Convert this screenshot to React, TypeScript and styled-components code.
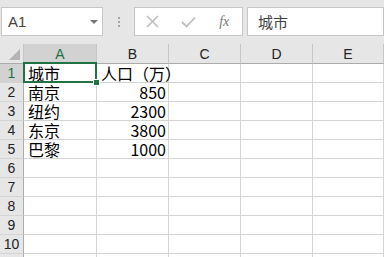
import React from 'react'
import styled, { createGlobalStyle } from 'styled-components'

const GlobalStyle = createGlobalStyle`
  html, body {
    margin: 0;
    padding: 0;
    background: #ffffff;
    overflow: hidden;
  }
  body {
    font-family: "Noto Sans CJK SC", "Liberation Sans", sans-serif;
  }
`

const Sheet = styled.div`
  width: 384px;
  height: 257px;
  overflow: hidden;
  background: #ffffff;
`

const Toolbar = styled.div`
  display: flex;
  align-items: center;
  height: 44px;
  box-sizing: border-box;
  padding: 7px 0 8px 1px;
  background: #e6e6e6;
`

const Box = styled.div<{ $w?: number }>`
  box-sizing: border-box;
  height: 29px;
  ${p => (p.$w ? `width: ${p.$w}px;` : 'flex: 1;')}
  background: #ffffff;
  border: 1px solid #c6c6c6;
  display: flex;
  align-items: center;
`

const NameText = styled.span`
  flex: 1;
  padding-left: 6px;
  font-family: "Liberation Sans", sans-serif;
  font-size: 15px;
  color: #444444;
`

const Caret = styled.span`
  width: 0;
  height: 0;
  margin-right: 4px;
  border-left: 4px solid transparent;
  border-right: 4px solid transparent;
  border-top: 4px solid #777777;
`

const Grip = styled.div`
  width: 31px;
  display: flex;
  flex-direction: column;
  align-items: center;
  gap: 2px;
  span {
    width: 2px;
    height: 2px;
    background: #a6a6a6;
  }
`

const IconBtn = styled.div`
  width: 36px;
  display: flex;
  justify-content: center;
  align-items: center;
`

const Fx = styled.span`
  font-family: "Liberation Serif", serif;
  font-style: italic;
  font-size: 14px;
  color: #777777;
`

const FormulaText = styled.span`
  padding-left: 10px;
  font-size: 15px;
  color: #444444;
`

const Gap = styled.div<{ $w: number }>`
  width: ${p => p.$w}px;
`

const Grid = styled.div`
  display: grid;
  grid-template-columns: 24px 73px 72px 72px 72px 1fr;
  grid-template-rows: 20px;
  grid-auto-rows: 19px;
`

const ColHead = styled.div<{ $active?: boolean }>`
  box-sizing: border-box;
  background: ${p => (p.$active ? '#d2d2d2' : '#e6e6e6')};
  border-right: 1px solid #c6c6c6;
  border-bottom: ${p => (p.$active ? '2px solid #217346' : '1px solid #ababab')};
  color: ${p => (p.$active ? '#217346' : '#222222')};
  font-family: "Liberation Sans", sans-serif;
  font-size: 14px;
  display: flex;
  align-items: center;
  justify-content: center;
  padding-top: ${p => (p.$active ? '1px' : '0')};
`

const Corner = styled.div`
  box-sizing: border-box;
  background: #e6e6e6;
  border-right: 1px solid #c6c6c6;
  border-bottom: 1px solid #ababab;
  display: flex;
  align-items: flex-end;
  justify-content: flex-end;
  padding: 0 3px 3px 0;
`

const RowHead = styled.div<{ $active?: boolean }>`
  box-sizing: border-box;
  background: ${p => (p.$active ? '#d2d2d2' : '#e6e6e6')};
  border-right: 1px solid #ababab;
  border-bottom: 1px solid #d4d4d4;
  color: ${p => (p.$active ? '#217346' : '#222222')};
  font-family: "Liberation Sans", sans-serif;
  font-size: 14px;
  line-height: 16px;
  display: flex;
  align-items: center;
  justify-content: center;
`

const Cell = styled.div<{ $num?: boolean; $selected?: boolean }>`
  position: relative;
  box-sizing: border-box;
  border-right: 1px solid #d4d4d4;
  border-bottom: 1px solid #d4d4d4;
  font-size: 16px;
  line-height: 17px;
  color: #000000;
  white-space: nowrap;
  overflow: visible;
  display: flex;
  align-items: center;
  justify-content: ${p => (p.$num ? 'flex-end' : 'flex-start')};
  padding: ${p => (p.$num ? '0 2px 0 0' : '0 0 0 4px')};
  ${p =>
    p.$selected &&
    `
    &::after {
      content: '';
      position: absolute;
      left: -1px;
      top: -2px;
      right: -1px;
      bottom: -1px;
      border: 2px solid #217346;
      pointer-events: none;
    }
    &::before {
      content: '';
      position: absolute;
      right: -4px;
      bottom: -4px;
      width: 5px;
      height: 5px;
      background: #217346;
      border: 1px solid #ffffff;
      z-index: 2;
    }
  `}
`

const cols = ['A', 'B', 'C', 'D', 'E']

const data: [string, string][] = [
  ['城市', '人口（万）'],
  ['南京', '850'],
  ['纽约', '2300'],
  ['东京', '3800'],
  ['巴黎', '1000']
]

export default function App() {
  // 10 numbered rows, plus the top sliver of row 11 at the window's edge
  const rows = Array.from({ length: 11 }, (_, i) => i + 1)
  return (
    <Sheet>
      <GlobalStyle />
      <Toolbar>
        <Box $w={102}>
          <NameText>A1</NameText>
          <Caret />
        </Box>
        <Grip>
          <span />
          <span />
          <span />
        </Grip>
        <Box $w={109}>
          <IconBtn>
            <svg width="13" height="13" viewBox="0 0 13 13">
              <path d="M1 1 L12 12 M12 1 L1 12" stroke="#bdbdbd" strokeWidth="1.6" fill="none" />
            </svg>
          </IconBtn>
          <IconBtn>
            <svg width="15" height="12" viewBox="0 0 15 12">
              <path d="M1 6 L5.5 10.5 L14 1.5" stroke="#bdbdbd" strokeWidth="1.8" fill="none" />
            </svg>
          </IconBtn>
          <IconBtn>
            <Fx>fx</Fx>
          </IconBtn>
        </Box>
        <Gap $w={4} />
        <Box>
          <FormulaText>城市</FormulaText>
        </Box>
      </Toolbar>
      <Grid>
        <Corner>
          <svg width="11" height="11" viewBox="0 0 11 11">
            <path d="M11 0 L11 11 L0 11 Z" fill="#b4b4b4" />
          </svg>
        </Corner>
        {cols.map(c => (
          <ColHead key={c} $active={c === 'A'}>
            {c}
          </ColHead>
        ))}
        {rows.map(r => {
          const d = data[r - 1]
          return (
            <React.Fragment key={r}>
              <RowHead $active={r === 1}>{r <= 10 ? r : ''}</RowHead>
              <Cell $selected={r === 1}>{d ? d[0] : ''}</Cell>
              <Cell $num={!!d && r > 1}>{d ? d[1] : ''}</Cell>
              <Cell />
              <Cell />
              <Cell />
            </React.Fragment>
          )
        })}
      </Grid>
    </Sheet>
  )
}
